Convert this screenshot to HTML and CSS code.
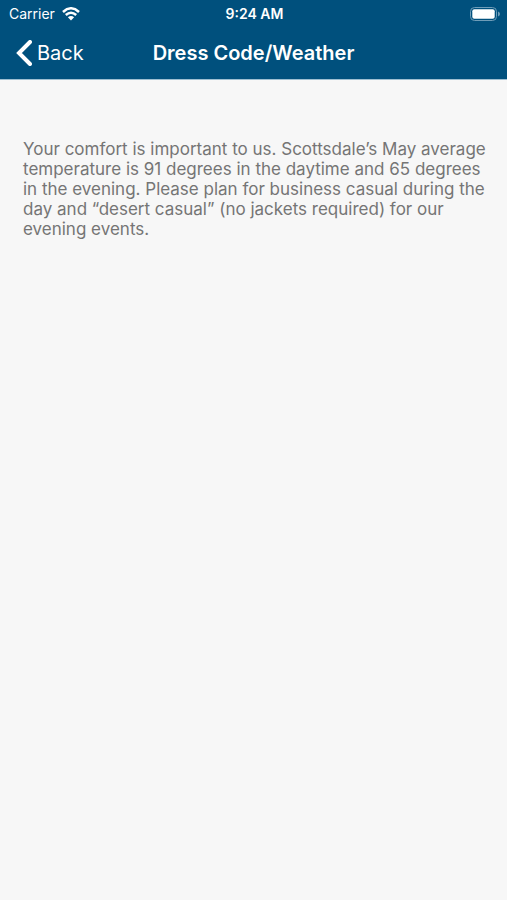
FILE: index.html
```html
<!DOCTYPE html>
<html lang="en">
  <head>
    <meta charset="UTF-8" />
    <meta name="viewport" content="width=device-width, initial-scale=1.0" />
    <title>Dress Code/Weather</title>
    <link rel="stylesheet" href="styles.css">
  </head>
  <body>
    <header class="header">
      <div class="status-bar">
        <div class="carrier">
          <span>Carrier</span>
          <svg class="wifi" viewBox="0 0 18 14" aria-hidden="true">
            <path d="M1 5 Q9 -2.4 17 5" />
            <path d="M3.8 8 Q9 3.4 14.2 8" />
            <path class="dot" d="M9 13.4 L5.9 10.3 Q9 7.9 12.1 10.3 Z" />
          </svg>
        </div>
        <time class="clock">9:24 AM</time>
        <svg class="battery" viewBox="0 0 30 14" aria-hidden="true">
          <rect class="shell" x="0.5" y="0.5" width="26" height="13" rx="4" />
          <rect class="level" x="2.3" y="2.3" width="22.4" height="9.4" rx="2" />
          <path class="tip" d="M28 4.5 Q30 5.3 30 7 Q30 8.7 28 9.5 Z" />
        </svg>
      </div>
      <nav class="nav-bar">
        <a class="back" href="#">
          <svg class="chevron" viewBox="0 0 16 26" aria-hidden="true">
            <path d="M14 2 L3 13 L14 24" />
          </svg>
          <span>Back</span>
        </a>
        <h1 class="title">Dress Code/Weather</h1>
      </nav>
    </header>

    <main class="content">
      <p>
        Your comfort is important to us. Scottsdale’s May average temperature is
        91 degrees in the daytime and 65 degrees in the evening. Please plan for
        business casual during the day and “desert casual” (no jackets required)
        for our evening events.
      </p>
    </main>
  </body>
</html>
```
FILE: styles.css
```css
body {
  margin: 0;
  background: #f7f7f7;
  color: #757575;
  font-family: Inter, "Liberation Sans", sans-serif;
}

.header {
  background: #00507d;
  color: #fff;
  border-bottom: 1px solid #9dbfd2;
}

.status-bar {
  display: grid;
  grid-template-columns: 1fr auto 1fr;
  align-items: center;
  height: 27px;
  padding: 0 7px 0 9px;
  font-size: 14px;
}

.carrier {
  display: flex;
  align-items: center;
  gap: 7px;
}

.wifi {
  width: 18px;
  height: 14px;
  fill: none;
  stroke: #fff;
  stroke-width: 2.5;
}

.wifi .dot {
  fill: #fff;
  stroke: none;
}

.clock {
  font-weight: 600;
}

.battery {
  justify-self: end;
  width: 30px;
  height: 14px;
  fill: #fff;
}

.battery .shell {
  fill: none;
  stroke: #6f9db8;
}

.battery .tip {
  fill: #6f9db8;
}

.nav-bar {
  display: grid;
  grid-template-columns: 1fr auto 1fr;
  align-items: center;
  height: 52px;
  padding: 0 16px;
}

.back {
  display: flex;
  align-items: center;
  gap: 5px;
  color: #fff;
  font-size: 20px;
  text-decoration: none;
}

.chevron {
  width: 16px;
  height: 26px;
  fill: none;
  stroke: #fff;
  stroke-width: 4;
  stroke-linecap: round;
}

.title {
  margin: 0;
  font-size: 20px;
  font-weight: 600;
}

.content {
  padding: 59px 16px 59px 23px;
}

.content p {
  margin: 0;
  font-size: 17px;
  line-height: 20px;
}
```
